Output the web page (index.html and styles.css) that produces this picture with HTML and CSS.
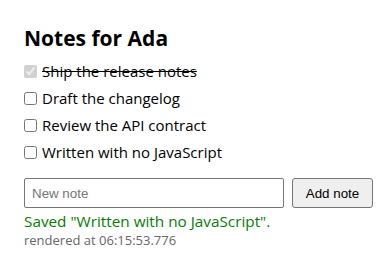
FILE: index.html
```html
<!DOCTYPE html>
<html>
<head>
<meta charset="utf-8">
<link rel="stylesheet" href="styles.css">
</head>
<body>
<main class="app">
  <h1 class="title">Notes for Ada</h1>
  <ul class="notes">
    <li class="note done"><label><input type="checkbox" checked disabled> <span>Ship the release notes</span></label></li>
    <li class="note"><label><input type="checkbox"> <span>Draft the changelog</span></label></li>
    <li class="note"><label><input type="checkbox"> <span>Review the API contract</span></label></li>
    <li class="note"><label><input type="checkbox"> <span>Written with no JavaScript</span></label></li>
  </ul>
  <form class="add">
    <input class="field" type="text" placeholder="New note">
    <button class="btn" type="button">Add note</button>
  </form>
  <p class="status">Saved "Written with no JavaScript".</p>
  <p class="stamp">rendered at 06:15:53.776</p>
</main>
</body>
</html>
```
FILE: styles.css
```css
body {
  margin: 0;
  font-family: "Segoe UI", "Open Sans", sans-serif;
  color: #000;
  background: #fff;
}
.app {
  padding: 22px 24px 0 24px;
}
.title {
  font-size: 21px;
  font-weight: 700;
  margin: 0 0 4px 0;
  line-height: 32px;
}
.notes {
  list-style: none;
  margin: 0;
  padding: 0;
}
.note {
  font-size: 15px;
  line-height: 27px;
}
.note label {
  display: flex;
  align-items: center;
  gap: 5px;
}
.note input {
  margin: 0;
  width: 13px;
  height: 13px;
}
.done span {
  text-decoration: line-through;
}
.add {
  display: flex;
  gap: 8px;
  margin-top: 12px;
}
.field {
  flex: none;
  width: 260px;
  height: 30px;
  box-sizing: border-box;
  font-family: "Liberation Sans", Arial, sans-serif;
  font-size: 13.33px;
  padding: 4px 7px;
  border: 1px solid #767676;
  border-radius: 2px;
}
.field::placeholder {
  color: #757575;
}
.btn {
  flex: none;
  width: 81px;
  height: 30px;
  box-sizing: border-box;
  white-space: nowrap;
  font-family: "Liberation Sans", Arial, sans-serif;
  font-size: 13.33px;
  padding: 0 6px;
  border: 1px solid #767676;
  border-radius: 3px;
  background: #efefef;
  color: #000;
}
.status {
  margin: 3px 0 0 0;
  color: #008000;
  font-size: 15.3px;
  line-height: 20px;
}
.stamp {
  margin: 0;
  color: #666;
  font-size: 13px;
  line-height: 18px;
}
```
